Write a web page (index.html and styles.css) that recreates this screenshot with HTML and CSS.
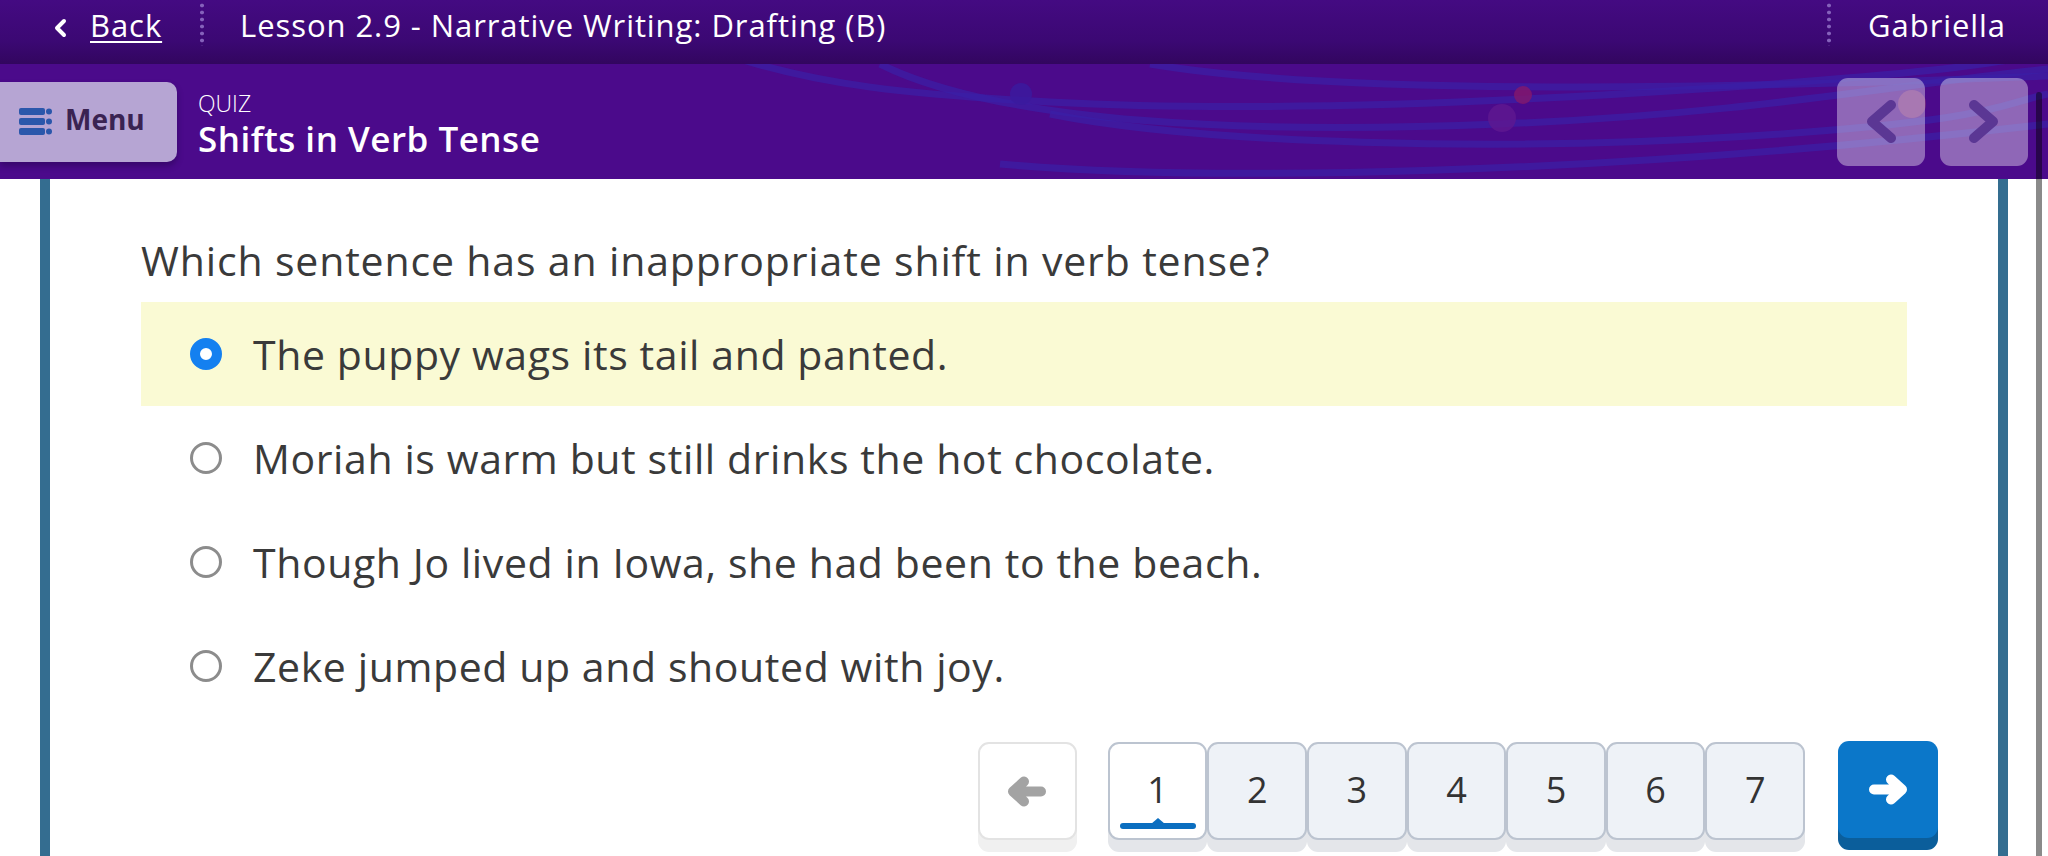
FILE: index.html
```html
<!DOCTYPE html>
<html lang="en">
<head>
<meta charset="utf-8">
<title>Shifts in Verb Tense</title>
<link rel="stylesheet" href="styles.css">
</head>
<body>
<div class="app">
  <header class="topbar">
    <a class="back" href="#">
      <svg class="back-icon" viewBox="0 0 14 20" width="14" height="20"><polyline points="11,3 4,10 11,17" fill="none" stroke="#fff" stroke-width="4" stroke-linecap="round" stroke-linejoin="round"/></svg>
      <span class="back-label">Back</span>
    </a>
    <span class="sep sep-left"></span>
    <span class="lesson">Lesson 2.9 - Narrative Writing: Drafting (B)</span>
    <span class="sep sep-right"></span>
    <span class="user">Gabriella</span>
  </header>

  <header class="subbar">
    <svg class="subbar-art" viewBox="0 0 2048 115" width="2048" height="115" aria-hidden="true">
      <g fill="none" stroke="#3a1fa6" stroke-width="7" stroke-opacity="0.7">
        <path d="M 740 -5 C 820 20, 900 30, 1050 38 S 1400 45, 1700 25 S 2000 -5, 2048 -10"/>
        <path d="M 880 0 C 1000 60, 1250 70, 1500 60 S 1900 20, 2048 5"/>
        <path d="M 1050 50 C 1200 80, 1500 88, 1750 72 S 2000 40, 2048 30"/>
        <path d="M 1000 100 C 1200 118, 1600 112, 2048 60"/>
        <path d="M 1150 0 C 1300 25, 1600 30, 2048 12"/>
      </g>
      <circle cx="1021" cy="30" r="11" fill="#3b1a9e" fill-opacity="0.85"/>
      <circle cx="1523" cy="31" r="9" fill="#85186b" fill-opacity="0.8"/>
      <circle cx="1502" cy="54" r="14" fill="#5f1890" fill-opacity="0.8"/>
      <circle cx="1912" cy="40" r="14" fill="#a54a7a" fill-opacity="0.45"/>
    </svg>
    <button class="menu-btn">
      <svg class="menu-icon" viewBox="0 0 33 27" width="33" height="27">
        <rect x="0" y="0" width="26" height="7" rx="2" fill="#2b57ab"/>
        <rect x="0" y="10" width="26" height="7" rx="2" fill="#2b57ab"/>
        <rect x="0" y="20" width="26" height="7" rx="2" fill="#2b57ab"/>
        <circle cx="30" cy="3.5" r="3" fill="#2b57ab"/>
        <circle cx="30" cy="13.5" r="3" fill="#2b57ab"/>
        <circle cx="30" cy="23.5" r="3" fill="#2b57ab"/>
      </svg>
      <span class="menu-label">Menu</span>
    </button>
    <div class="title-block">
      <div class="kicker">QUIZ</div>
      <div class="title">Shifts in Verb Tense</div>
    </div>
    <div class="nav">
      <button class="nav-btn" aria-label="Previous">
        <svg viewBox="0 0 30 43" width="30" height="43"><polyline points="25,5 6,21.5 25,38" fill="none" stroke="#5b3794" stroke-width="10" stroke-linecap="round" stroke-linejoin="round"/></svg>
      </button>
      <button class="nav-btn" aria-label="Next">
        <svg viewBox="0 0 30 43" width="30" height="43"><polyline points="5,5 24,21.5 5,38" fill="none" stroke="#5b3794" stroke-width="10" stroke-linecap="round" stroke-linejoin="round"/></svg>
      </button>
    </div>
  </header>

  <main class="card">
    <p class="question">Which sentence has an inappropriate shift in verb tense?</p>
    <ul class="options">
      <li class="option selected"><span class="radio"></span><span class="option-text">The puppy wags its tail and panted.</span></li>
      <li class="option"><span class="radio"></span><span class="option-text">Moriah is warm but still drinks the hot chocolate.</span></li>
      <li class="option"><span class="radio"></span><span class="option-text">Though Jo lived in Iowa, she had been to the beach.</span></li>
      <li class="option"><span class="radio"></span><span class="option-text">Zeke jumped up and shouted with joy.</span></li>
    </ul>
    <nav class="pager">
      <button class="pager-prev" aria-label="Previous question">
        <svg viewBox="0 0 40 31" width="40" height="31"><path d="M 34 15.5 H 8 M 17 5.5 L 6 15.5 L 17 25.5" fill="none" stroke="#a3a3a3" stroke-width="10" stroke-linecap="round" stroke-linejoin="round"/></svg>
      </button>
      <div class="pages">
        <button class="page current">1<span class="marker"></span></button>
        <button class="page">2</button>
        <button class="page">3</button>
        <button class="page">4</button>
        <button class="page">5</button>
        <button class="page">6</button>
        <button class="page">7</button>
      </div>
      <button class="pager-next" aria-label="Next question">
        <svg viewBox="0 0 40 31" width="40" height="31"><path d="M 6 15.5 H 32 M 23 5.5 L 34 15.5 L 23 25.5" fill="none" stroke="#ffffff" stroke-width="10" stroke-linecap="round" stroke-linejoin="round"/></svg>
      </button>
    </nav>
  </main>

  <div class="scrollbar"></div>
</div>
</body>
</html>
```

FILE: styles.css
```css
* { box-sizing: border-box; }

html, body {
  margin: 0;
  padding: 0;
  width: 2048px;
  height: 856px;
  overflow: hidden;
  background: #ffffff;
  font-family: "Open Sans", "Noto Sans", sans-serif;
  color: #3a3a3a;
}

button {
  font: inherit;
  color: inherit;
  border: none;
  background: none;
  padding: 0;
  margin: 0;
  cursor: pointer;
}

.app {
  position: relative;
  width: 2048px;
  height: 856px;
  display: flex;
  flex-direction: column;
}

/* ---------- top bar ---------- */
.topbar {
  height: 64px;
  flex: 0 0 64px;
  display: flex;
  align-items: flex-start;
  padding: 5px 42px 0 53px;
  background: linear-gradient(#440a82, #3b0873 65%, #32065f);
  color: #ffffff;
  font-size: 31px;
  line-height: 40px;
  letter-spacing: 0.03em;
}

.back {
  display: flex;
  align-items: flex-start;
  color: #ffffff;
  text-decoration: none;
}

.back-icon {
  margin-top: 13px;
  flex: 0 0 auto;
}

.back-label {
  margin-left: 23px;
  text-decoration: underline;
  text-decoration-thickness: 2px;
  text-underline-offset: 4px;
}

.sep {
  width: 4px;
  height: 44px;
  margin-top: -3px;
  background-image: radial-gradient(circle, #8562bb 1.6px, transparent 2.2px);
  background-size: 4px 7px;
  background-repeat: repeat-y;
  flex: 0 0 auto;
}

.sep-left { margin-left: 38px; }

.lesson { margin-left: 36px; }

.sep-right { margin-left: auto; }

.user { margin-left: 37px; }

/* ---------- sub bar ---------- */
.subbar {
  position: relative;
  height: 115px;
  flex: 0 0 115px;
  display: flex;
  align-items: center;
  background: #4b0a8b;
  overflow: hidden;
}

.subbar-art {
  position: absolute;
  left: 0;
  top: 0;
  z-index: 0;
}

.menu-btn {
  position: relative;
  z-index: 1;
  width: 177px;
  height: 80px;
  display: flex;
  align-items: center;
  padding-left: 19px;
  background: #b6a5d3;
  border-radius: 0 10px 10px 0;
  box-shadow: 0 4px 6px rgba(20, 0, 50, 0.35);
}

.menu-icon { flex: 0 0 auto; }

.menu-label {
  margin-left: 13px;
  margin-bottom: 5px;
  font-size: 28px;
  font-weight: 700;
  color: #3a2352;
  line-height: 1;
}

.title-block {
  position: relative;
  z-index: 1;
  margin-left: 21px;
  margin-top: 6px;
  color: #ffffff;
}

.kicker {
  font-size: 23px;
  font-weight: 300;
  line-height: 28px;
}

.title {
  font-size: 35px;
  font-weight: 600;
  line-height: 44px;
  letter-spacing: 0.5px;
}

.nav {
  position: relative;
  z-index: 1;
  margin-left: auto;
  padding-right: 20px;
  display: flex;
  gap: 15px;
}

.nav-btn {
  width: 88px;
  height: 88px;
  border-radius: 11px;
  background: rgba(255, 255, 255, 0.38);
  display: flex;
  align-items: center;
  justify-content: center;
}

/* ---------- card ---------- */
.card {
  flex: 1 1 auto;
  margin-left: 40px;
  width: 1968px;
  border-left: 10px solid #346d90;
  border-right: 10px solid #346d90;
  background: #ffffff;
  padding: 51px 91px 0 91px;
}

.question {
  margin: 0 0 12px 0;
  font-size: 41px;
  line-height: 60px;
  letter-spacing: 0.85px;
  color: #3a3a3a;
}

.options {
  list-style: none;
  margin: 0;
  padding: 0;
}

.option {
  height: 104px;
  display: flex;
  align-items: center;
  padding-left: 49px;
}

.option.selected { background: #fafad4; }

.radio {
  flex: 0 0 32px;
  width: 32px;
  height: 32px;
  border-radius: 50%;
  border: 3px solid #8c8c8c;
  background: #ffffff;
}

.option.selected .radio {
  border: 10px solid #1480f0;
}

.option-text {
  margin-left: 31px;
  font-size: 41px;
  line-height: 60px;
  letter-spacing: 0.6px;
  color: #3a3a3a;
}

/* ---------- pager ---------- */
.pager {
  margin-top: 23px;
  margin-right: -31px;
  display: flex;
  justify-content: flex-end;
  align-items: flex-start;
}

.pager-prev {
  width: 99px;
  height: 98px;
  margin-right: 31px;
  margin-top: 1px;
  border: 2px solid #e3e3e3;
  border-radius: 11px;
  background: #ffffff;
  box-shadow: 0 12px 0 #f0f0f0;
  display: flex;
  align-items: center;
  justify-content: center;
}

.pages {
  display: flex;
  margin-top: 1px;
}

.page {
  position: relative;
  width: 99.6px;
  height: 98px;
  border: 2px solid #bcc4d0;
  border-radius: 11px;
  background: #eef2f7;
  box-shadow: 0 12px 0 #e4e6ea;
  font-size: 36px;
  line-height: 1;
  color: #333333;
  display: flex;
  align-items: center;
  justify-content: center;
  padding-bottom: 2px;
}

.page.current { background: #ffffff; }

.marker {
  position: absolute;
  left: 10px;
  right: 9px;
  bottom: 9px;
  height: 6px;
  border-radius: 3px;
  background: #0b6ec0;
}

.marker::before {
  content: "";
  position: absolute;
  left: 50%;
  top: -5px;
  margin-left: -7px;
  border-left: 7px solid transparent;
  border-right: 7px solid transparent;
  border-bottom: 6px solid #0b6ec0;
}

.pager-next {
  width: 100px;
  height: 97px;
  margin-left: 33px;
  border-radius: 11px;
  background: #0b77c9;
  box-shadow: 0 12px 0 #0b5e9b;
  display: flex;
  align-items: center;
  justify-content: center;
}

/* ---------- overlay scrollbar ---------- */
.scrollbar {
  position: absolute;
  left: 2036px;
  top: 92px;
  width: 6px;
  height: 764px;
  border-radius: 3px 3px 0 0;
  background: rgba(0, 0, 0, 0.46);
}
```
